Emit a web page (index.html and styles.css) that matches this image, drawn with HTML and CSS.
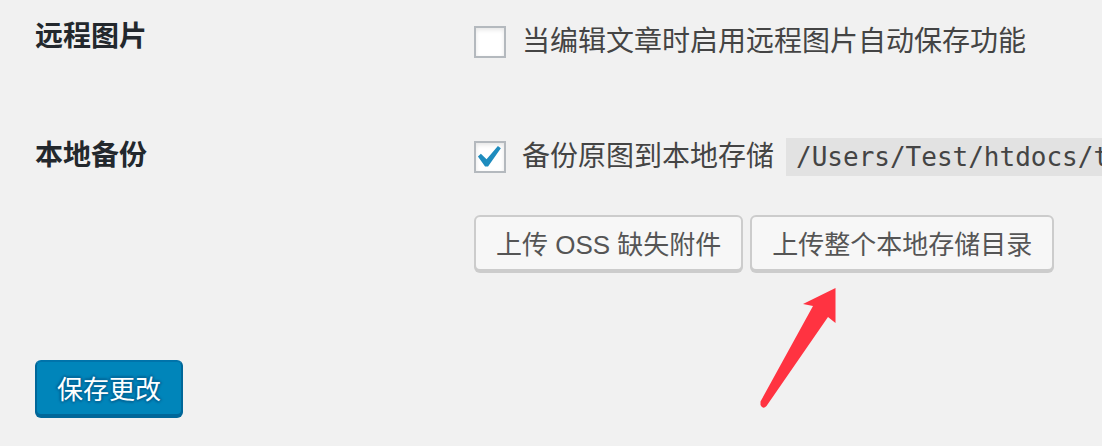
FILE: index.html
```html
<!DOCTYPE html>
<html lang="zh-CN">
<head>
<meta charset="utf-8">
<title>设置</title>
<link rel="stylesheet" href="styles.css">
</head>
<body>
<div class="page">
  <div class="form">
    <div class="row row-remote">
      <div class="th">远程图片</div>
      <div class="td">
        <label class="opt"><span class="cb"></span><span class="opt-text">当编辑文章时启用远程图片自动保存功能</span></label>
      </div>
    </div>
    <div class="row row-backup">
      <div class="th">本地备份</div>
      <div class="td">
        <label class="opt"><span class="cb checked"><svg viewBox="4 2.6 14.5 14.5" width="32" height="32"><path d="M14.83 4.89l1.34.94-5.81 8.38H9.02L5.78 9.67l1.34-1.25 2.57 2.4z" fill="#1e8cbe"/></svg></span><span class="opt-text">备份原图到本地存储</span><code class="path">/Users/Test/htdocs/test/wp-content/uploads</code></label>
        <div class="btns">
          <button class="btn">上传 OSS 缺失附件</button>
          <button class="btn">上传整个本地存储目录</button>
        </div>
      </div>
    </div>
  </div>
  <div class="submit">
    <button class="btn btn-primary">保存更改</button>
  </div>
</div>
<svg class="arrow" width="1102" height="446" viewBox="0 0 1102 446">
  <path d="M760.5 401.5 L813 306 L803 304 L835.5 288 L835.5 323 L828 317 L766.5 406 Q763 410 760.5 405 Z" fill="#ff3341"/>
</svg>
</body>
</html>
```

FILE: styles.css
```css
html, body {
  margin: 0;
  padding: 0;
  background: #f1f1f1;
  overflow: hidden;
  height: 446px;
}
body {
  position: relative;
  font-family: "Liberation Sans", "Noto Sans CJK SC", sans-serif;
  color: #444;
}
.page {
  padding-left: 35px;
}
.row {
  display: grid;
  grid-template-columns: 439px 1fr;
}
.th {
  font-size: 28px;
  font-weight: 600;
  color: #23282d;
  line-height: 40px;
}
.row-remote .th { padding-top: 17px; }
.row-remote .td { padding-top: 22px; }
.row-backup { margin-top: 74px; }
.row-backup .th { padding-top: 0; }
.row-backup .td { padding-top: 1px; }
.td { min-width: 0; }
.opt {
  display: flex;
  align-items: center;
  height: 40px;
  font-size: 28px;
  white-space: nowrap;
}
.cb {
  flex: none;
  box-sizing: border-box;
  width: 32px;
  height: 32px;
  border: 2px solid #b4b9be;
  background: #fff;
  box-shadow: inset 0 2px 4px rgba(0,0,0,0.1);
  margin-right: 16px;
  display: flex;
  align-items: center;
  justify-content: center;
}
.cb svg { display: block; margin: -2px; }
.opt-text { line-height: 40px; }
.path {
  margin-left: 12px;
  background: #e2e2e2;
  font-family: "DejaVu Sans Mono", monospace;
  font-size: 26px;
  line-height: 38px;
  padding: 0 10px;
  color: #444;
}
.btns {
  display: flex;
  gap: 7px;
  margin-top: 38px;
}
.btn {
  box-sizing: border-box;
  height: 56px;
  padding: 0 20px 2px;
  font-family: "Liberation Sans", "Noto Sans CJK SC", sans-serif;
  font-size: 26px;
  color: #555;
  background: #f7f7f7;
  border: 2px solid #ccc;
  border-radius: 6px;
  box-shadow: 0 2px 0 #ccc;
  white-space: nowrap;
}
.submit {
  margin-top: 89px;
}
.btn-primary {
  background: #0085ba;
  border-color: #0073aa #006799 #006799;
  box-shadow: 0 2px 0 #006799;
  color: #fff;
  text-shadow: 0 -2px 2px #006799, 2px 0 2px #006799, 0 2px 2px #006799, -2px 0 2px #006799;
}
.arrow {
  position: absolute;
  left: 0;
  top: 0;
  pointer-events: none;
}
```
